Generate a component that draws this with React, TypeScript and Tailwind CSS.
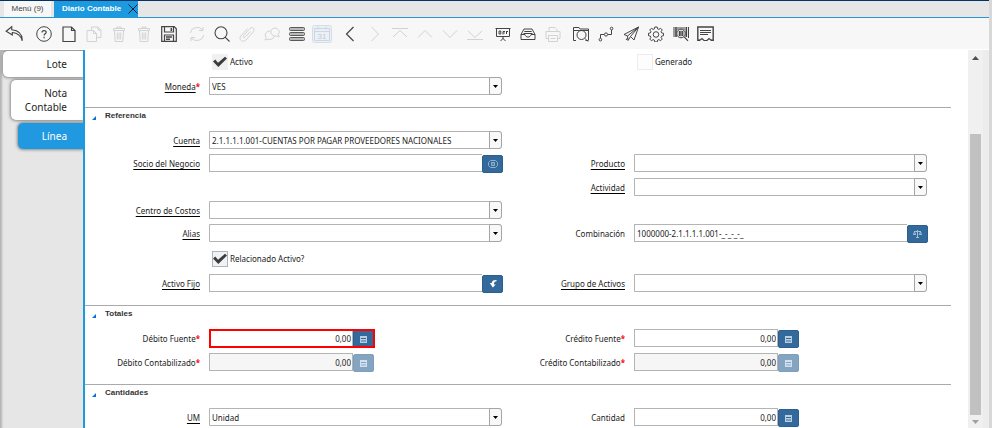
import React, { useId, useState } from 'react'

type IconProps = { d: string; className?: string; size?: number; width?: number }

function Stroke({ d, size = 16, width = 1, className = '' }: IconProps) {
  return (
    <svg width={size} height={size} viewBox="0 0 16 16" fill="none" stroke="currentColor" strokeWidth={width} className={className} aria-hidden="true">
      <path d={d} />
    </svg>
  )
}

const paths = {
  undo: 'M6 1.500 1 5.500l5.500 3.300V6.700c4.500.3 7.500 2.500 8.800 7.300.2-5.800-3.300-9.300-9.300-9.800Z',
  file: 'M2 1h8.500L14 4.500V15.500H2ZM10.500 1v3.500H14',
  copy: 'M5.500 4V1h6.500L15 4v7.500h-4.500M12 1v3h3M1 4.500h6.500l3 3v8H1ZM7.500 4.500v3h3',
  trash: 'M3 4.500h10M3.500 4.500l.7 11h7.600l.7-11M2.500 2.500h11v2h-11ZM6 2.500V1h4v1.500M6.300 6.500v7M8 6.500v7M9.700 6.500v7',
  refresh: 'M1.200 7a7 6.500 0 0 1 12.500-3M14 1v3.500H10M14.800 9a7 6.500 0 0 1-12.500 3M2 15v-3.500H6',
  search: 'M13 6.800a6 6 0 1 1-12 0a6 6 0 0 1 12 0ZM11.300 11.300l4.200 4.200',
  clip: 'M11.500 5.500 6 11.300c-1 1-2.500-.4-1.500-1.500l6.500-7.300c2.500-2.500 5.800.8 3.300 3.300L7 14c-3.500 3.300-8-.8-5-4.200L8.500 2.500',
  chat: 'M10.500 2a4.600 4 0 0 1 3.700 6.500l1 2.500-2.700-1a4.600 4 0 1 1-2-8ZM6 5a4.500 4 0 0 0-3.800 6.500L1 14l3.200-.8a4.500 4 0 0 0 6-2.700',
  left: 'M11.500 1 4.500 8l7 7',
  right: 'M4.500 1l7 7-7 7',
  first: 'M0 2.500h16M1 11l7-6.500 7 6.500',
  up: 'M1 11.500l7-7 7 7',
  down: 'M1 4.500l7 7 7-7',
  last: 'M0 13.500h16M1 5l7 6.500L15 5',
  board: 'M.5 2.500h15M1.500 3v7.500h13V3M8 10.500V13M5.500 15 8 12.500l2.500 2.500M4 5v3h1.800V5ZM8 8.500V5.500h2M8.300 7h1.500M11.500 5v3M11.500 5.500h1.500',
  inbox: 'M1 8.500 4 3h8l3 5.500v5H1ZM1 8.500h4c.5 3.400 5.500 3.400 6 0h4M3.500 7.500h9M4.300 5.500h7.400',
  print: 'M4 5.500v-4h6l2 2v2M1 5.500h14v7h-2.500M3.500 12.500H1v-7M3.500 9.500h9v6h-9ZM5.500 12.500h5',
  folder: 'M3 14.500H.5v-13H6L7 3h8.500v11M.5 4.500h15M13 9a4.500 4.500 0 1 1-9 0a4.500 4.500 0 0 1 9 0ZM11.800 12.300l3.200 3.200M12.500 14.500h3',
  flow: 'M2.500 12V8.500H6M10 8.500h3.500V4M3.700 13.700a1.300 1.300 0 1 1-2.600 0a1.300 1.300 0 0 1 2.600 0ZM9.600 8.500a1.600 1.600 0 1 1-3.200 0a1.600 1.600 0 0 1 3.200 0ZM14.900 2.500a1.300 1.300 0 1 1-2.600 0a1.300 1.300 0 0 1 2.600 0Z',
  plane: 'M1 8.500 15.500 1 11 14 7.500 10.500 5 14.500 4.500 10ZM15.500 1 4.500 10M15.500 1l-8 9.500M3 14l1.500-2',
  gear: 'M6.800 1h2.400l.4 1.900 1.300.5 1.700-1.100 1.600 1.600-1.100 1.700.5 1.300 1.900.4v2.400l-1.900.4-.5 1.300 1.100 1.700-1.600 1.600-1.700-1.100-1.300.5-.4 1.900H6.800l-.4-1.900-1.300-.5-1.700 1.100-1.600-1.600 1.100-1.700-.5-1.300L.5 9.700V7.300l1.900-.4.5-1.300-1.100-1.700 1.600-1.600 1.700 1.100 1.300-.5ZM10.800 8.500a2.800 2.800 0 1 1-5.600 0a2.800 2.800 0 0 1 5.600 0Z',
}

const Help = () => (
  <svg width="16" height="16" viewBox="0 0 16 16" fill="none" stroke="currentColor" aria-hidden="true">
    <circle cx="8" cy="8" r="7.300" />
    <path d="M6 6.500c0-2.600 4.200-2.500 4.200-.2 0 1.500-2.100 1.600-2.100 3.200M8.100 10.800v1.400" strokeWidth="1.200" />
  </svg>
)

const Save = () => (
  <svg width="16" height="16" viewBox="0 0 16 16" fill="none" stroke="currentColor" aria-hidden="true">
    <path d="M.7.700h12.500l2.100 2.100v12.500H.700ZM3.500 1v5h9V1M3.500 15V9h9v6" strokeWidth="1.200" />
    <path d="M10.300 2v3M5 11h6M5 13.200h4" strokeWidth="1.500" />
  </svg>
)

const Rows = () => (
  <svg width="16" height="16" viewBox="0 0 16 16" fill="#b9b9b9" stroke="#5a5a5a" aria-hidden="true">
    <rect x=".5" y="1.500" width="15" height="3" rx="1" />
    <rect x=".5" y="6.500" width="15" height="3" rx="1" />
    <rect x=".5" y="11.500" width="15" height="3" rx="1" />
  </svg>
)

const Calendar = () => (
  <svg width="20" height="18" viewBox="0 0 20 18" fill="none" aria-hidden="true">
    <rect x=".5" y=".5" width="19" height="17" rx="2" fill="#ebf0f6" stroke="#d3deeb" />
    <path d="M2.500 3.500h15v12h-15ZM2.500 6.500h15M6 1.500v3M14 1.500v3" stroke="#cdd6e1" />
    <text x="10" y="14" textAnchor="middle" fontSize="8" fill="#c3cad3" fontFamily="Liberation Sans, sans-serif">31</text>
  </svg>
)

const Barcode = () => (
  <svg width="16" height="16" viewBox="0 0 16 16" fill="none" stroke="currentColor" aria-hidden="true">
    <path d="M1 1v10M11 1v3M15.500 1v11" />
    <path d="M3 1v10M13.300 1v10" strokeWidth="1.600" />
    <path d="M5 1v3M7 1v2M9 1v2" />
    <circle cx="8" cy="7.500" r="4.300" fill="#e0e0e0" />
    <path d="M6.500 5v5M8 5v5M9.700 5v5M11.200 10.800l3.800 4" strokeWidth="1.200" />
  </svg>
)

const Note = () => (
  <svg width="17" height="16" viewBox="0 0 17 16" fill="none" stroke="currentColor" aria-hidden="true">
    <path d="M3 14.300H.8V1h15.400v13.300H14" strokeWidth="1.400" />
    <path d="M3 4.500h11M3 6.500h11M3 8.500h8" strokeWidth="1.200" />
    <path d="M2.500 14.500 5 12.500l2 2h3l2-2 2.500 2" strokeWidth="1.200" />
  </svg>
)

type Tool = { name: string; icon: React.ReactNode; off?: boolean }

const tools: Tool[][] = [
  [
    { name: 'Ayuda', icon: <Help /> },
    { name: 'Nuevo', icon: <Stroke d={paths.file} width={1.2} /> },
    { name: 'Copiar', icon: <Stroke d={paths.copy} />, off: true },
    { name: 'Eliminar', icon: <Stroke d={paths.trash} />, off: true },
    { name: 'Eliminar selección', icon: <Stroke d={paths.trash} />, off: true },
    { name: 'Guardar', icon: <Save /> },
  ],
  [
    { name: 'Refrescar', icon: <Stroke d={paths.refresh} />, off: true },
    { name: 'Buscar', icon: <Stroke d={paths.search} width={1.1} /> },
    { name: 'Adjuntos', icon: <Stroke d={paths.clip} />, off: true },
    { name: 'Chat', icon: <Stroke d={paths.chat} />, off: true },
    { name: 'Cuadrícula', icon: <Rows /> },
    { name: 'Calendario', icon: <Calendar />, off: true },
  ],
  [
    { name: 'Registro padre', icon: <Stroke d={paths.left} width={1.2} /> },
    { name: 'Registro detalle', icon: <Stroke d={paths.right} />, off: true },
    { name: 'Primero', icon: <Stroke d={paths.first} />, off: true },
    { name: 'Anterior', icon: <Stroke d={paths.up} />, off: true },
    { name: 'Siguiente', icon: <Stroke d={paths.down} />, off: true },
    { name: 'Último', icon: <Stroke d={paths.last} />, off: true },
  ],
  [
    { name: 'Informe', icon: <Stroke d={paths.board} /> },
    { name: 'Archivo', icon: <Stroke d={paths.inbox} /> },
    { name: 'Imprimir', icon: <Stroke d={paths.print} />, off: true },
  ],
  [
    { name: 'Detalle', icon: <Stroke d={paths.folder} /> },
    { name: 'Flujo', icon: <Stroke d={paths.flow} /> },
    { name: 'Solicitudes', icon: <Stroke d={paths.plane} /> },
    { name: 'Proceso', icon: <Stroke d={paths.gear} /> },
    { name: 'Producto', icon: <Barcode /> },
    { name: 'Personalizar', icon: <Note /> },
  ],
]

function ToolButton({ name, icon, off }: Tool) {
  return (
    <button aria-label={name} disabled={off} className="flex h-[31px] w-[25px] items-center justify-center text-[#444] disabled:text-[#d2d2d2]">
      {icon}
    </button>
  )
}

function Toolbar() {
  return (
    <div className="flex h-8 items-center gap-[3px] border-b border-white bg-[#f7f7f7] pl-px">
      <div className="w-[27px]">
        <ToolButton name="Deshacer" icon={<Stroke d={paths.undo} size={18} />} />
      </div>
      {tools.map((group, i) => (
        <div key={i} className="flex">
          {group.map((tool) => <ToolButton key={tool.name} {...tool} />)}
        </div>
      ))}
    </div>
  )
}

interface LabelProps {
  id: string
  text: string
  link?: boolean
  required?: boolean
}

function Label({ id, text, link, required }: LabelProps) {
  return (
    <label htmlFor={id} className="h-[18px] truncate pr-[9px] text-right leading-[19px]">
      <span className={link ? 'underline decoration-black decoration-1 underline-offset-2 [text-decoration-skip-ink:none]' : ''}>{text}</span>
      {required && <span className="font-bold text-[#f00]">*</span>}
    </label>
  )
}

type FieldProps = Omit<LabelProps, 'id'> & { value?: string }

function Combo({ value = '', ...label }: FieldProps) {
  const id = useId()
  return (
    <>
      <Label id={id} {...label} />
      <div className="relative h-[18px]">
        <select id={id} defaultValue={value} className="h-full w-full appearance-none rounded-r-[3px] border border-[#b4b4b4] bg-white pt-px pr-4 pl-0.5 outline-none">
          <option>{value}</option>
        </select>
        <span className="pointer-events-none absolute inset-y-0 right-0 flex w-[13px] items-center justify-center rounded-r-[3px] border border-[#a5a5a5] bg-[#f8f8f8]">
          <svg width="5" height="3" viewBox="0 0 5 3" aria-hidden="true"><path d="M0 0h5L2.500 3Z" /></svg>
        </span>
      </div>
    </>
  )
}

const btn = 'mt-px flex h-[18px] w-[21px] shrink-0 items-center justify-center rounded-[2px] border border-[#2a5f8e] bg-[#336a9b] text-white disabled:opacity-60'

function Lookup({ value = '', icon, ...label }: FieldProps & { icon: React.ReactNode }) {
  const id = useId()
  return (
    <>
      <Label id={id} {...label} />
      <div className="-mr-px flex h-[19px]">
        <input id={id} defaultValue={value} className="h-[18px] min-w-0 flex-1 border border-r-0 border-[#b4b4b4] pt-px pl-0.5 outline-none" />
        <button type="button" aria-label={`Buscar ${label.text}`} className={btn}>{icon}</button>
      </div>
    </>
  )
}

function Amount({ value = '0,00', disabled, marked, ...label }: FieldProps & { disabled?: boolean; marked?: boolean }) {
  const id = useId()
  return (
    <>
      <Label id={id} {...label} />
      <div className={`relative flex h-[19px] w-[166px] ${marked ? 'after:pointer-events-none after:absolute after:inset-0 after:border-2 after:border-[#f00]' : ''}`}>
        <input id={id} defaultValue={value} disabled={disabled} className="h-[18px] w-36 border border-[#b4b4b4] pt-px pr-px text-right outline-none disabled:bg-[#f6f6f6]" />
        <button type="button" aria-label={`Calculadora ${label.text}`} disabled={disabled} className={btn}>
          <svg width="7" height="7" viewBox="0 0 7 7" fill="none" aria-hidden="true">
            <path d="M0 0h7v7H0Z" fill="#b9cee1" />
            <path d="M1 2.500h5" stroke="#336a9b" />
            <path d="M1 4h5v2H1Z" fill="#7ba0c2" />
          </svg>
        </button>
      </div>
    </>
  )
}

function Check({ text, checked = false, tone }: { text: string; checked?: boolean; tone: string }) {
  const [on, setOn] = useState(checked)
  return (
    <label className="col-start-2 flex h-[21px] items-center gap-0.5 pl-[3px]">
      <span className="relative flex size-4">
        <input type="checkbox" checked={on} onChange={() => setOn(!on)} className={`size-4 appearance-none border ${tone}`} />
        {on && (
          <svg width="14" height="12" viewBox="0 0 14 12" fill="#3c3c3c" className="pointer-events-none absolute top-0.5 left-px" aria-hidden="true">
            <path d="M0 5.500 2.300 3.600 5 6.800 12 .8 14 2.500 5.300 11Z" />
          </svg>
        )}
      </span>
      {text}
    </label>
  )
}

function Row({ left, right }: { left?: React.ReactNode; right?: React.ReactNode }) {
  return (
    <div className="grid min-h-[18px] grid-cols-[124px_minmax(0,1fr)_132px_minmax(0,1fr)] pr-6">
      <div className="col-span-2 grid grid-cols-subgrid">{left}</div>
      <div className="col-span-2 grid grid-cols-subgrid">{right}</div>
    </div>
  )
}

function Section({ title, children }: { title: string; children: React.ReactNode }) {
  return (
    <section className="mt-3 border-t border-[#aaa]">
      <h2 className="flex h-[23px] gap-[9px] pl-[7px] font-['Liberation_Sans',sans-serif] leading-[15px] font-bold text-[#333]">
        <svg width="4" height="4" viewBox="0 0 4 4" className="mt-2" aria-hidden="true"><path d="M4 0v4H0Z" fill="#0b6fd6" /></svg>
        {title}
      </h2>
      <div className="flex flex-col gap-[5px]">{children}</div>
    </section>
  )
}

const partner = (
  <svg width="10" height="8" viewBox="0 0 10 8" fill="none" stroke="#8fb1cf" aria-hidden="true">
    <path d="M2.500.5h5l2 2v3l-2 2h-5l-2-2v-3ZM3.500 2.500h3v3h-3ZM5 2.500v2" />
  </svg>
)

const asset = (
  <svg width="8" height="8" viewBox="0 0 8 8" fill="#fff" aria-hidden="true">
    <path d="M7 0C4 .2 3 1 2.800 3H.8L3.800 7.500 6.800 4.500H5C4.800 2.500 5.300 1.500 8 1Z" />
  </svg>
)

const scale = (
  <svg width="9" height="8" viewBox="0 0 9 8" fill="none" stroke="#a3c0da" aria-hidden="true">
    <path d="M4.500 0v7.500M1 1.500h7M3 7.500h3M.3 4.500 1.500 2l1.200 2.500ZM6.300 4.500 7.500 2l1.200 2.500Z" />
  </svg>
)

function Form() {
  return (
    <form className="min-w-0 flex-1 overflow-hidden pt-px pr-[17px]">
      <div className="flex flex-col gap-[5px]">
        <Row
          left={<Check text="Activo" checked tone="border-[#f0f0f0] bg-[#f0f0f0]" />}
          right={<Check text="Generado" tone="border-[#ececec] bg-[#fdfdfd]" />}
        />
        <Row left={<Combo text="Moneda" link required value="VES" />} />
      </div>
      <Section title="Referencia">
        <Row left={<Combo text="Cuenta" link value="2.1.1.1.1.001-CUENTAS POR PAGAR PROVEEDORES NACIONALES" />} />
        <Row left={<Lookup text="Socio del Negocio" link icon={partner} />} right={<Combo text="Producto" link />} />
        <Row right={<Combo text="Actividad" link />} />
        <Row left={<Combo text="Centro de Costos" link />} />
        <Row left={<Combo text="Alias" link />} right={<Lookup text="Combinación" value="1000000-2.1.1.1.1.001-_-_-_-_" icon={scale} />} />
        <Row left={<Check text="Relacionado Activo?" checked tone="border-[#a9b7c4] bg-[#f0f2f4]" />} />
        <Row left={<Lookup text="Activo Fijo" link icon={asset} />} right={<Combo text="Grupo de Activos" link />} />
      </Section>
      <Section title="Totales">
        <Row left={<Amount text="Débito Fuente" required marked />} right={<Amount text="Crédito Fuente" required />} />
        <Row left={<Amount text="Débito Contabilizado" required disabled />} right={<Amount text="Crédito Contabilizado" required disabled />} />
      </Section>
      <Section title="Cantidades">
        <Row left={<Combo text="UM" link value="Unidad" />} right={<Amount text="Cantidad" />} />
      </Section>
    </form>
  )
}

const sideTab = 'rounded-l-[5px] pr-4 text-right text-[10px] leading-[14px] shadow-[0_0_3px_1px_#8c8c8c]'

export default function App() {
  return (
    <div className="flex h-screen overflow-hidden border-r-[3px] border-[#d8d8d8] bg-white font-['Noto_Sans',sans-serif] text-[8px] text-[#222]">
      <div className="flex min-w-0 flex-1 flex-col">
        <header className="flex h-[18px] gap-[3px] border-t border-b border-t-[#003366] border-b-[#2597d6] bg-[#e6e6e6] pl-1 font-['Liberation_Sans',sans-serif]">
          <button className="w-[47px] bg-[#f7f7f7] text-[#444]">Menú (9)</button>
          <div className="flex w-[84px] items-center justify-between bg-[#1c9ae0] pl-2 text-white">
            <button className="font-bold whitespace-nowrap">Diario Contable</button>
            <button aria-label="Cerrar" className="text-[#123]">
              <svg width="10" height="10" viewBox="0 0 10 10" stroke="currentColor" aria-hidden="true"><path d="M.5.5l9 9M9.500.5l-9 9" /></svg>
            </button>
          </div>
        </header>
        <Toolbar />
        <main className="flex min-h-0 flex-1">
          <nav className="flex w-[85px] shrink-0 flex-col items-stretch gap-[3px] overflow-hidden border-r-2 border-[#1c9ae0] bg-[#e6e6e6] pt-px shadow-[inset_2px_2px_2px_#b5b5b5]">
            <button className={`${sideTab} ml-[3px] h-[26px] bg-white`}>Lote</button>
            <button className={`${sideTab} ml-[11px] h-10 bg-white`}>Nota<br />Contable</button>
            <button className={`${sideTab} ml-[18px] h-[26px] bg-[#2199e0] text-white`}>Línea</button>
          </nav>
          <Form />
          <div aria-hidden="true" className="flex w-[21px] shrink-0 flex-col border-r-[6px] border-[#ececec] bg-[#f0f0f0] px-0.5">
            <svg viewBox="0 0 11 16" className="h-4 w-[11px]" fill="#505050"><path d="M2 10h7L5.500 6Z" /></svg>
            <div className="grow-[68]" />
            <div className="grow-[281] bg-[#c1c1c1]" />
            <svg viewBox="0 0 11 13" className="h-[13px] w-[11px]" fill="#a0a0a0"><path d="M2 5h7L5.500 9Z" /></svg>
          </div>
        </main>
      </div>
    </div>
  )
}
